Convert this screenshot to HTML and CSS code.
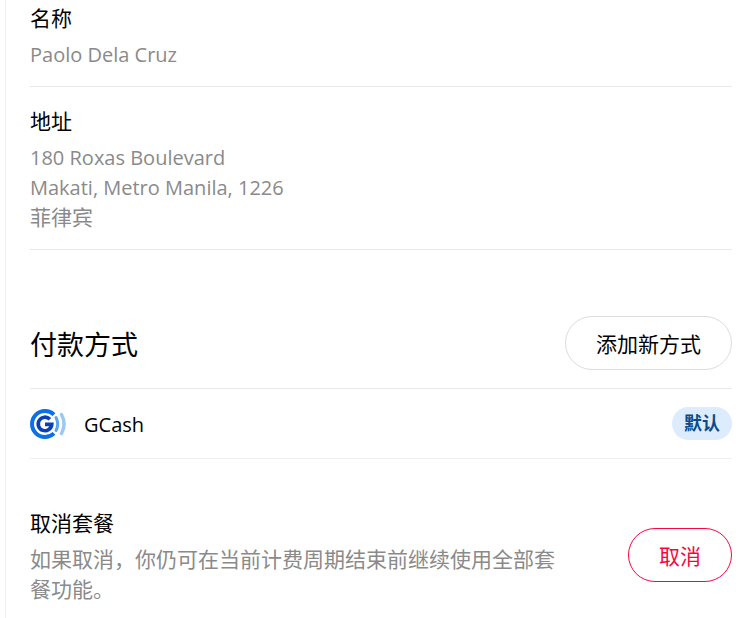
FILE: index.html
```html
<!DOCTYPE html>
<html lang="zh-CN">
<head>
  <meta charset="UTF-8" />
  <meta name="viewport" content="width=device-width, initial-scale=1.0"/>
  <title>账户</title>
  <link rel="stylesheet" href="styles.css">
</head>
<body>
  <main class="panel">
    <div class="info-row first">
      <div class="label">名称</div>
      <div class="value"><span class="latin">Paolo Dela Cruz</span></div>
    </div>

    <div class="info-row second">
      <div class="label">地址</div>
      <div class="value"><span class="latin">180 Roxas Boulevard</span><br><span class="latin">Makati, Metro Manila, 1226</span><br>菲律宾</div>
    </div>

    <div class="section-head">
      <h2>付款方式</h2>
      <button class="pill">添加新方式</button>
    </div>

    <div class="method">
      <svg class="method-logo" viewBox="0 0 36 30" width="36" height="30" aria-hidden="true">
        <path d="M24 5.6A13 13 0 1 0 24 24.4" fill="none" stroke="#0a6fe8" stroke-width="4"/>
        <path d="M19.9 10.2A6.8 6.8 0 1 0 21.8 15.4H15" fill="none" stroke="#0b3fb5" stroke-width="3.6"/>
        <path d="M26 8.5A14 14 0 0 1 26 21.5" fill="none" stroke="#5aa5ee" stroke-width="3" stroke-linecap="round"/>
        <path d="M31.5 5.5A20 20 0 0 1 31.5 24.5" fill="none" stroke="#9cc8f5" stroke-width="3.5" stroke-linecap="round"/>
      </svg>
      <span class="method-name">GCash</span>
      <span class="badge">默认</span>
    </div>

    <div class="cancel">
      <div class="cancel-text">
        <div class="label">取消套餐</div>
        <div class="desc">如果取消，你仍可在当前计费周期结束前继续使用全部套餐功能。</div>
      </div>
      <button class="pill danger">取消</button>
    </div>
  </main>
</body>
</html>
```

FILE: styles.css
```css
* {
  box-sizing: border-box;
}

html, body {
  margin: 0;
  height: 100%;
  overflow: hidden;
}

body {
  background-color: #ffffff;
  color: #000000;
  font-family: "Open Sans", "Noto Sans CJK SC", sans-serif;
  font-size: 21px;
  line-height: 30px;
  padding-left: 5px;
}

.panel {
  width: 727px;
  height: 618px;
  border-left: 1px solid #eeeeee;
  padding: 3px 0 0 24px;
}

.info-row {
  padding: 20px 0 16px;
  border-bottom: 1px solid #e8e8e8;
}

.info-row.first {
  padding: 0 0 17px;
}

.info-row.second {
  padding: 19px 0 17px;
}

.label {
  color: #000000;
}

.value {
  margin-top: 6px;
  color: #8a8a8a;
}

.latin {
  font-size: 20px;
  line-height: 20px;
}

.section-head {
  display: flex;
  align-items: center;
  justify-content: space-between;
  margin-top: 66px;
  padding-bottom: 18px;
  border-bottom: 1px solid #e8e8e8;
}

h2 {
  margin: 0;
  padding-top: 4px;
  font-size: 27px;
  font-weight: 400;
}

.pill {
  height: 54px;
  padding: 2px 30px 0;
  border: 1px solid #dddddd;
  border-radius: 27px;
  background: #ffffff;
  color: #000000;
  font: inherit;
}

.pill.danger {
  margin-bottom: 2px;
  border-color: #f5063c;
  color: #f5063c;
}

.method {
  display: flex;
  align-items: center;
  height: 70px;
  border-bottom: 1px solid #efefef;
}

.method-logo {
  flex: none;
}

.method-name {
  margin-left: 18px;
  padding-top: 2px;
  font-size: 20px;
}

.badge {
  margin-left: auto;
  width: 60px;
  height: 33px;
  border-radius: 17px;
  background: #dcecfd;
  color: #0a4a8c;
  font-size: 18px;
  font-weight: 700;
  line-height: 33px;
  text-align: center;
}

.cancel {
  display: flex;
  align-items: center;
  justify-content: space-between;
  margin-top: 49px;
}

.cancel-text {
  width: 530px;
}

.desc {
  margin-top: 6px;
  color: #8a8a8a;
}
```
